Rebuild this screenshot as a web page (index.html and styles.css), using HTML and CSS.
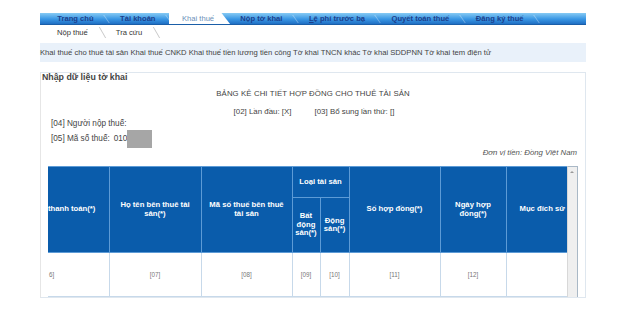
FILE: index.html
```html
<!DOCTYPE html>
<html lang="vi">
<head>
  <meta charset="UTF-8" />
  <title>Khai thuế</title>
  <link rel="stylesheet" href="styles.css">
</head>
<body>
  <div class="page">
    <!-- Menu chính -->
    <div class="topnav">
      <a href="#" class="tab">Trang chủ</a>
      <a href="#" class="tab">Tài khoản</a>
      <a href="#" class="tab active">Khai thuế</a>
      <a href="#" class="tab">Nộp tờ khai</a>
      <a href="#" class="tab"><u>L</u>ệ phí trước bạ</a>
      <a href="#" class="tab">Quyết toán thuế</a>
      <a href="#" class="tab">Đăng ký thuế</a>
    </div>

    <div class="subnav">
      <a href="#" class="sub">Nộp thuế</a>
      <a href="#" class="sub">Tra cứu</a>
    </div>

    <div class="linkbar">
      <a href="#">Khai thuế cho thuê tài sản</a>
      <a href="#">Khai thuế CNKD</a>
      <a href="#">Khai thuế tiền lương tiền công</a>
      <a href="#">Tờ khai TNCN khác</a>
      <a href="#">Tờ khai SDDPNN</a>
      <a href="#">Tờ khai tem điện tử</a>
    </div>

    <!-- Nhập dữ liệu -->
    <div class="panel">
      <div class="panel-title">Nhập dữ liệu tờ khai</div>
      <div class="form-title">BẢNG KÊ CHI TIẾT HỢP ĐỒNG CHO THUÊ TÀI SẢN</div>
      <div class="form-sub">
        <span>[02] Lần đầu: [X]</span>
        <span>[03] Bổ sung lần thứ: []</span>
      </div>
      <div class="info">
        <div>[04] Người nộp thuế:</div>
        <div class="mst">[05] Mã số thuế: <span class="mst-val">010</span><span class="mask"></span></div>
      </div>
      <div class="unit">Đơn vị tiền: Đồng Việt Nam</div>

      <div class="table-wrap">
        <div class="table-scroll">
          <table class="grid">
            <colgroup>
              <col style="width:61px"><col style="width:92px"><col style="width:91px">
              <col style="width:28px"><col style="width:29px"><col style="width:91px">
              <col style="width:66px"><col style="width:62px">
            </colgroup>
            <thead>
              <tr class="h1">
                <th rowspan="2" class="cut">thanh toán(*)</th>
                <th rowspan="2">Họ tên bên thuê tài sản(*)</th>
                <th rowspan="2">Mã số thuế bên thuê tài sản</th>
                <th colspan="2" class="group">Loại tài sản</th>
                <th rowspan="2">Số hợp đồng(*)</th>
                <th rowspan="2">Ngày hợp đồng(*)</th>
                <th rowspan="2" class="cut-r">Mục đích sử</th>
              </tr>
              <tr class="h2">
                <th>Bất động sản(*)</th>
                <th>Động sản(*)</th>
              </tr>
            </thead>
            <tbody>
              <tr>
                <td class="cut">6]</td>
                <td>[07]</td>
                <td>[08]</td>
                <td>[09]</td>
                <td>[10]</td>
                <td>[11]</td>
                <td>[12]</td>
                <td></td>
              </tr>
            </tbody>
          </table>
          <div class="next-row"></div>
        </div>
        <div class="vscroll"><span class="arrow"></span></div>
      </div>
    </div>
  </div>
</body>
</html>
```

FILE: styles.css
```css
body {
  margin: 0;
  background: #fff;
  font-family: "Liberation Sans", Arial, sans-serif;
  color: #333;
}
a {
  text-decoration: none;
}
.page {
  width: 546px;
  margin-left: 40px;
  padding-top: 13px;
}

/* menu chính */
.topnav {
  display: flex;
  height: 11px;
  padding-left: 4px;
  background: linear-gradient(#86caf4, #3a97e4 55%, #1f6fc4);
  border-bottom: 1px solid #1a5ea8;
}
.tab {
  position: relative;
  padding: 0 13.25px;
  font-size: 7.6px;
  font-weight: bold;
  line-height: 11px;
  color: #1d3f8c;
  white-space: nowrap;
}
.tab::after {
  content: "";
  position: absolute;
  right: 0;
  top: 2px;
  width: 1px;
  height: 8px;
  background: rgba(255, 255, 255, 0.35);
  transform: skewX(35deg);
}
.tab.active {
  background: #fff;
  color: #6a8fb8;
  font-weight: normal;
  clip-path: polygon(0 0, 86% 0, 100% 100%, 0 100%);
  padding-right: 16px;
  margin-right: -3px;
}

.subnav {
  display: flex;
  height: 14px;
  padding-left: 17px;
  margin-top: 1px;
}
.sub {
  position: relative;
  font-size: 7.6px;
  line-height: 14px;
  color: #333;
  margin-right: 28px;
}
.sub::after {
  content: "";
  position: absolute;
  right: -15px;
  top: 1px;
  width: 1px;
  height: 11px;
  background: #c8c8c8;
  transform: skewX(30deg);
}

.linkbar {
  margin-top: 3px;
  height: 19px;
  background: #e9f1fa;
  font-size: 7.65px;
  line-height: 19px;
  white-space: nowrap;
}
.linkbar a {
  color: #444;
}

/* panel */
.panel {
  margin-top: 10px;
  height: 224px;
  border: 1px solid #dfe7ef;
  border-left: 1px solid #e6e6e6;
  position: relative;
  overflow: hidden;
}
.panel-title {
  font-size: 8.8px;
  font-weight: bold;
  color: #444;
  padding: 0 1px;
  line-height: 8px;
}
.form-title {
  text-align: center;
  font-size: 7.8px;
  color: #444;
  margin-top: 8px;
  line-height: 10px;
  letter-spacing: 0.1px;
}
.form-sub {
  display: flex;
  justify-content: center;
  gap: 23px;
  font-size: 7.9px;
  color: #444;
  margin-top: 8px;
  line-height: 10px;
  padding-left: 2px;
}
.info {
  padding-left: 10px;
  margin-top: 2px;
  font-size: 8.2px;
  color: #444;
}
.info > div {
  line-height: 10px;
}
.mst {
  display: flex;
  align-items: center;
  margin-top: 1px;
}
.mst-val {
  margin-left: 4px;
}
.mask {
  display: inline-block;
  width: 25px;
  height: 18px;
  background: #a6a6a6;
  margin-left: 0;
}
.unit {
  text-align: right;
  font-style: italic;
  font-size: 7.8px;
  color: #555;
  padding-right: 8px;
  line-height: 10px;
}

/* bảng */
.table-wrap {
  display: flex;
  margin: 8px 7px 0 7px;
}
.table-scroll {
  width: 520px;
  overflow: hidden;
}
.grid {
  border-collapse: collapse;
  table-layout: fixed;
  width: 520px;
}
.grid th {
  background: #0a5cab;
  color: #fff;
  font-size: 7.7px;
  font-weight: bold;
  text-align: center;
  border: 1px solid #5d9bd6;
  line-height: 8.5px;
  padding: 0 7px;
}
.grid th.group {
  padding: 0 2px;
}
.grid .h1 th {
  height: 30px;
}
.grid .h2 th {
  height: 54px;
  padding: 0 1px;
}
.grid th.cut {
  text-align: left;
  padding-left: 0;
  border-left: none;
  white-space: nowrap;
}
.grid th.cut-r {
  white-space: nowrap;
  text-align: left;
  padding-left: 13px;
  border-right: none;
}
.grid td {
  height: 41px;
  text-align: center;
  font-size: 6.3px;
  color: #777;
  border: 1px solid #c7d9ea;
  border-top: none;
}
.grid td.cut {
  text-align: left;
  border-left: none;
}
.next-row {
  height: 2px;
  border-top: 1px solid #f0e9b8;
  background: #fffbe0;
}
.vscroll {
  width: 9px;
  background: #efefef;
  border-left: 1px solid #d8d8d8;
  border-right: 1px solid #a9b8c6;
  border-top: 1px solid #a9b8c6;
  height: 130px;
  position: relative;
}
.arrow {
  position: absolute;
  top: 4px;
  left: 2px;
  border-left: 2px solid transparent;
  border-right: 2px solid transparent;
  border-bottom: 2px solid #999;
}
```
